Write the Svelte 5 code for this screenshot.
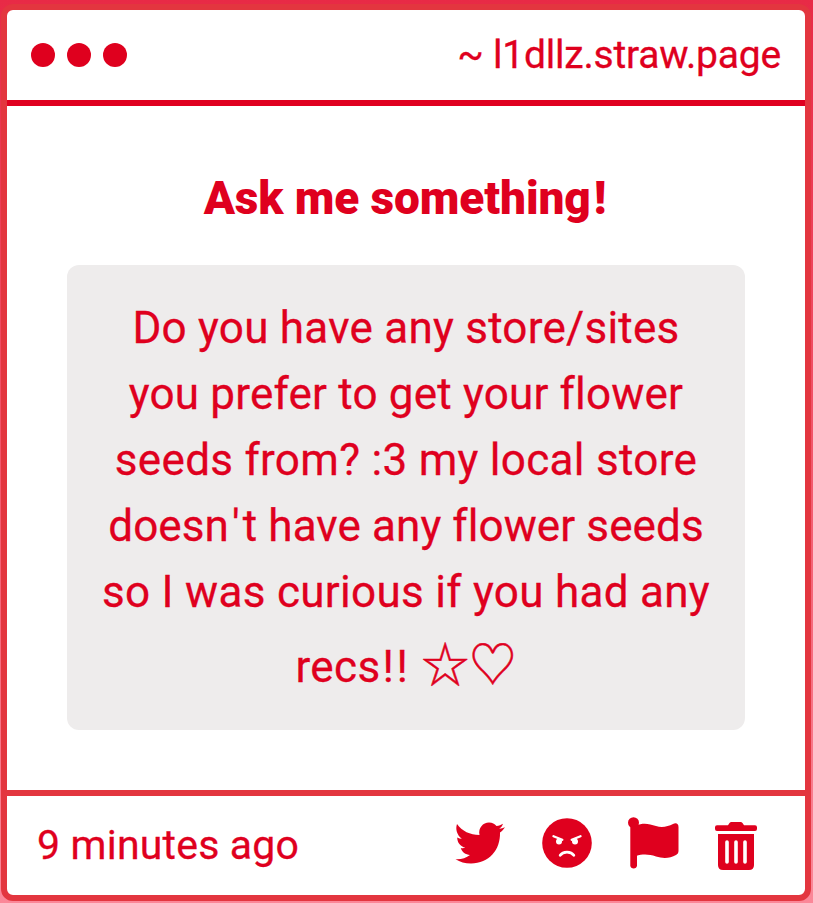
<script lang="ts">
  const page = '~ l1dllz.straw.page';
  const title = 'Ask me something';
  const question = [
    { text: 'Do you have any store/sites', spacing: 0.25 },
    { text: 'you prefer to get your flower', spacing: 0.2 },
    { text: 'seeds from? :3 my local store', spacing: 0.3 },
    { text: "doesn't have any flower seeds", spacing: 0.1 },
    { text: 'so I was curious if you had any', spacing: 0.3 },
  ];
  const age = '9 minutes ago';
</script>

<div class="backdrop">
  <article class="card">
    <header>
      <div class="dots"><i></i><i></i><i></i></div>
      <span class="page">{page}</span>
    </header>

    <main>
      <h1>{title}<span class="bang">!</span></h1>
      <div class="question">
        {#each question as { text, spacing }}
          {@const [head, tail] = text.split("'")}
          <div class="line" style="letter-spacing: {spacing}px">{head}{#if tail}<span class="apostrophe">'</span>{tail}{/if}</div>
        {/each}
        <div class="line last">rec<span class="marks">s!!</span> <span class="symbols">☆♡</span></div>
      </div>
    </main>

    <footer>
      <span class="age">{age}</span>
      <div class="actions">
        <button class="bird" aria-label="Share on Twitter">
          <svg width="50" height="42" viewBox="0 0 50 42">
            <path d="M2 2C7 9 15 13 24.500 13C23 6 28 .5 34 .5C37.500 .5 39.500 1.800 41.500 4C44 3.600 46 2.800 48 1.700C47.300 4 46 5.500 44.200 6.800C46.500 6.500 48 6 50 5.200C48.500 7.500 47 9 45 10.600C45.500 28 34 41.500 16 41.500C10 41.500 5 40 .5 37.200C6 37.600 11 36 15 33C10.500 32.700 7 30 5.800 26C7.500 26.300 9 26.200 10.400 25.700C5.400 24.500 2.200 20.600 2.200 15.500C3.700 16.300 5.200 16.700 6.800 16.700C2 13.200 .2 7 2 2Z" />
          </svg>
        </button>
        <button aria-label="Block sender">
          <svg width="50" height="50" viewBox="0 0 50 50">
            <circle cx="25" cy="25" r="24.800" />
            <g fill="none" stroke="#fff" stroke-linecap="round">
              <path d="M11.500 18.300L20.300 21.800M38.500 18.300L29.700 21.800" stroke-width="2.300" />
              <path d="M18.200 37.300C21 33 29 33 31.800 37.300" stroke-width="2.800" />
            </g>
            <circle cx="17" cy="23.500" r="3" fill="#fff" />
            <circle cx="33" cy="23.500" r="3" fill="#fff" />
          </svg>
        </button>
        <button aria-label="Report">
          <svg width="51" height="52" viewBox="0 0 51 52">
            <circle cx="5.500" cy="5.700" r="5.500" />
            <path d="M2.300 6H9V48.500C9 52.500 2.300 52.500 2.300 48.500Z" />
            <path d="M8 8.500C15 5.500 21 6.500 28 9C34 11 40 9.500 45 7C48 5.500 50.500 6.500 50.500 10V34C50.500 36 49.500 37 48 38C42 41.500 35 41.800 28 39.500C21 37.200 15 36.800 8 39Z" />
          </svg>
        </button>
        <button class="trash" aria-label="Delete">
          <svg width="42" height="48" viewBox="0 0 42 48">
            <path d="M13 3.200L14.500 1Q15.200 0 16.500 0H25.500Q26.800 0 27.500 1L29 3.200H40Q42 3.200 42 5.200V7Q42 9 40 9H2Q0 9 0 7V5.200Q0 3.200 2 3.200Z" />
            <path d="M3 12H39V43Q39 48 34 48H8Q3 48 3 43Z" />
            <path d="M12 20V40M21 20V40M30 20V40" fill="none" stroke="#fff" stroke-width="3.600" stroke-linecap="round" />
          </svg>
        </button>
      </div>
    </footer>
  </article>
</div>

<style>
  :global(body) { margin: 0; }

  .backdrop {
    box-sizing: border-box;
    width: 813px; height: 903px;
    padding: 4px 2px 2px 1px;
    background: linear-gradient(#e82a46, #f2566a 50%, #fb8798);
    overflow: hidden;
  }
  .card {
    box-sizing: border-box;
    width: 810px; height: 897px;
    display: flex; flex-direction: column;
    background: #fff; color: #df001e;
    border: 6px solid #e3363f;
    border-radius: 12px;
    font-family: Roboto, sans-serif;
  }

  header {
    box-sizing: border-box;
    height: 96px; flex: none;
    display: flex; align-items: center; justify-content: space-between;
    padding: 0 24px;
    border-bottom: 6px solid #e00020;
  }
  .dots { display: flex; gap: 12px; }
  .dots i { width: 24px; height: 24px; border-radius: 50%; background: #df001e; }
  .page {
    padding-bottom: 1px;
    font-size: 39px; letter-spacing: -.2px; white-space: pre;
    -webkit-text-stroke: .3px currentColor;
  }

  main {
    flex: 1;
    padding: 62px 60px 0;
    text-align: center;
  }
  h1 {
    margin: 0 2px 37px 0;
    font-size: 46px; font-weight: 900; line-height: 60px;
    letter-spacing: -.1px;
  }
  .bang { margin-left: 3px; }
  .question {
    box-sizing: border-box;
    height: 465px;
    padding-top: 30px;
    border-radius: 12px;
    background: #eeecec;
    font-size: 44px; letter-spacing: .35px;
    -webkit-text-stroke: .3px currentColor;
  }
  .line { height: 66px; line-height: 66px; white-space: pre; }
  .apostrophe { margin: 0 3px; }
  .last { padding-top: 9px; }
  .marks { letter-spacing: 2.500px; }
  .symbols {
    font-family: "Noto Sans CJK JP", sans-serif; font-size: 47.5px;
    line-height: 0; letter-spacing: 0;
    -webkit-text-stroke: .5px currentColor;
  }

  footer {
    box-sizing: border-box;
    height: 105px; flex: none;
    display: flex; align-items: center; justify-content: space-between;
    padding: 0 48px 5px 30px;
    border-top: 6px solid #e3363f;
  }
  .age {
    padding-top: 4px;
    font-size: 41px; letter-spacing: .2px;
    -webkit-text-stroke: .3px currentColor;
  }
  .actions { display: flex; align-items: center; gap: 36px; }
  button { display: flex; padding: 0; border: 0; background: none; color: inherit; }
  .bird { margin-right: 1px; }
  .trash { padding-top: 6px; }
  svg { display: block; fill: #df001e; }
</style>
